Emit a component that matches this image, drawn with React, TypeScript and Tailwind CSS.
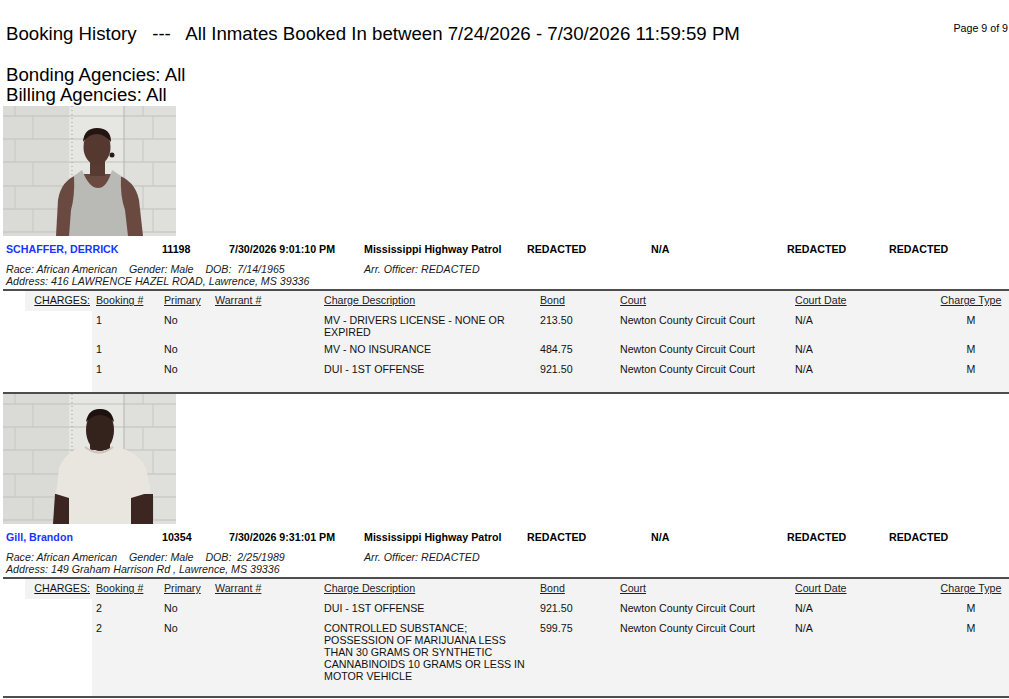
import React from "react";

type Charge = { booking: string; primary: string; desc: string; bond: string };

type Booking = {
  name: string;
  id: string;
  date: string;
  agency: string;
  race: string;
  gender: string;
  dob: string;
  address: string;
  photo: "tank" | "tee";
  charges: Charge[];
};

const BOOKINGS: Booking[] = [
  {
    name: "SCHAFFER, DERRICK",
    id: "11198",
    date: "7/30/2026 9:01:10 PM",
    agency: "Mississippi Highway Patrol",
    race: "African American",
    gender: "Male",
    dob: "7/14/1965",
    address: "416 LAWRENCE HAZEL ROAD, Lawrence, MS 39336",
    photo: "tank",
    charges: [
      { booking: "1", primary: "No", desc: "MV - DRIVERS LICENSE - NONE OR EXPIRED", bond: "213.50" },
      { booking: "1", primary: "No", desc: "MV - NO INSURANCE", bond: "484.75" },
      { booking: "1", primary: "No", desc: "DUI - 1ST OFFENSE", bond: "921.50" },
    ],
  },
  {
    name: "Gill, Brandon",
    id: "10354",
    date: "7/30/2026 9:31:01 PM",
    agency: "Mississippi Highway Patrol",
    race: "African American",
    gender: "Male",
    dob: "2/25/1989",
    address: "149 Graham Harrison Rd , Lawrence, MS 39336",
    photo: "tee",
    charges: [
      { booking: "2", primary: "No", desc: "DUI - 1ST OFFENSE", bond: "921.50" },
      {
        booking: "2",
        primary: "No",
        desc: "CONTROLLED SUBSTANCE; POSSESSION OF MARIJUANA LESS THAN 30 GRAMS OR SYNTHETIC CANNABINOIDS 10 GRAMS OR LESS IN MOTOR VEHICLE",
        bond: "599.75",
      },
    ],
  },
];

// mugshot stand-in: block wall + figure
function Mugshot({ kind }: { kind: "tank" | "tee" }) {
  const rows = [10, 33, 56, 80, 103, 126];
  return (
    <svg width="173" height="130" viewBox="0 0 173 130" className="block">
      <rect width="173" height="130" fill="#dadad7" />
      <rect x="66" y="0" width="55" height="130" fill="#e6e6e3" />
      <rect x="121" y="0" width="52" height="130" fill="#dfdfdc" />
      {rows.map((y) => (
        <line key={y} x1="0" y1={y} x2="173" y2={y} stroke="#c0c0bc" strokeWidth="1.2" />
      ))}
      {rows.map((y, i) => (
        <g key={"v" + y}>
          <line x1={i % 2 ? 30 : 12} y1={y - 23} x2={i % 2 ? 30 : 12} y2={y} stroke="#c6c6c2" />
          <line x1={i % 2 ? 150 : 140} y1={y - 23} x2={i % 2 ? 150 : 140} y2={y} stroke="#c6c6c2" />
        </g>
      ))}
      <line x1="69" y1="0" x2="69" y2="130" stroke="#9e9e9a" strokeDasharray="1 3" />
      <line x1="121" y1="0" x2="121" y2="130" stroke="#b4b4b0" />
      {kind === "tank" ? (
        <g>
          <path d="M53 130 L55 94 Q58 74 76 68 L112 68 Q132 74 136 94 L140 130 Z" fill="#6a4a40" />
          <rect x="87" y="52" width="15" height="18" fill="#573a32" />
          <path d="M71 70 L79 64 Q86 82 95 82 Q104 82 109 64 L118 70 Q117 90 122 104 L125 130 L66 130 L68 104 Q72 90 71 70 Z" fill="#b9b9b6" />
          <ellipse cx="94" cy="41" rx="13.5" ry="18" fill="#55382f" />
          <path d="M80 36 Q81 22 94 22 Q108 22 108 36 Q101 28 94 28 Q86 28 80 36 Z" fill="#231512" />
          <circle cx="109" cy="49" r="2.5" fill="#2a1a16" />
        </g>
      ) : (
        <g>
          <path d="M50 130 L52 100 L74 100 L74 130 Z" fill="#3b2621" />
          <path d="M126 130 L128 100 L150 100 L150 130 Z" fill="#3b2621" />
          <rect x="87" y="46" width="20" height="10" fill="#3a241f" />
          <path d="M80 52 Q96 62 112 52 Q136 58 143 74 L148 98 L128 104 L128 130 L66 130 L66 104 L53 100 L56 74 Q62 58 80 52 Z" fill="#e9e5df" />
          <path d="M82 53 Q96 64 110 53" fill="none" stroke="#c9c3bb" strokeWidth="2" />
          <ellipse cx="97" cy="36" rx="14" ry="21" fill="#34221d" />
          <path d="M83 28 Q85 15 97 15 Q109 15 111 28 Q104 21 97 21 Q90 21 83 28 Z" fill="#1d120f" />
        </g>
      )}
    </svg>
  );
}

function BookingRecord({ b }: { b: Booking }) {
  return (
    <div>
      <Mugshot kind={b.photo} />

      {/* name / booking summary */}
      <div className="grid grid-cols-[156px_67px_135px_163px_124px_136px_102px_1fr] pl-[3px] pt-[7px] text-[10.67px] leading-[12px] font-bold text-black">
        <div className="text-[#1a33ff]">{b.name}</div>
        <div>{b.id}</div>
        <div>{b.date}</div>
        <div>{b.agency}</div>
        <div>REDACTED</div>
        <div>N/A</div>
        <div>REDACTED</div>
        <div>REDACTED</div>
      </div>
      <div className="flex pl-[3px] mt-[8px] text-[10.67px] leading-[12px] italic text-[#1a1a1a]">
        <div className="w-[358px]">
          <div className="whitespace-pre">
            {`Race: ${b.race}    Gender: ${b.gender}    DOB:  ${b.dob}`}
          </div>
          <div>Address: {b.address}</div>
        </div>
        <div>Arr. Officer: REDACTED</div>
      </div>

      {/* charges */}
      <div className="mt-[2px] border-t-2 border-b-2 border-[#4d4d4d] flex text-[10.67px] leading-[12px] text-[#111]">
        <div className="ml-[22px] w-[67px] shrink-0">
          <div className="h-[20px] bg-[#f3f3f3] pt-[3px] pr-[2px] text-right underline underline-offset-[1px]">CHARGES:</div>
        </div>
        <div className="flex-1 bg-[#f3f3f3] pb-[12px]">
          <div className="grid grid-cols-[72px_51px_109px_216px_80px_175px_144px_64px_1fr] h-[20px] pt-[3px] underline underline-offset-[1px] text-[#222]">
            <div className="pl-[4px]">Booking #</div>
            <div>Primary</div>
            <div>Warrant #</div>
            <div>Charge Description</div>
            <div>Bond</div>
            <div>Court</div>
            <div>Court Date</div>
            <div className="text-center">Charge Type</div>
            <div />
          </div>
          {b.charges.map((c, i) => (
            <div
              key={i}
              className="grid grid-cols-[72px_51px_109px_216px_80px_175px_144px_64px_1fr] min-h-[20px] pt-[3px] pb-[2px]"
            >
              <div className="pl-[4px]">{c.booking}</div>
              <div>{c.primary}</div>
              <div />
              <div className="pr-[8px]">{c.desc}</div>
              <div>{c.bond}</div>
              <div>Newton County Circuit Court</div>
              <div>N/A</div>
              <div className="text-center">M</div>
              <div />
            </div>
          ))}
        </div>
      </div>
    </div>
  );
}

export default function App() {
  return (
    <div className="w-[1009px] h-[699px] overflow-hidden bg-white pl-[3px] font-['Liberation_Sans',Arial,sans-serif] text-black">
      <div className="flex justify-between items-start pt-[22px] pl-[3px]">
        <div className="mt-[1px] text-[18.67px] leading-[22px] whitespace-pre">
          {"Booking History   ---   All Inmates Booked In between 7/24/2026 - 7/30/2026 11:59:59 PM"}
        </div>
        <div className="text-[10.67px] leading-[12px] pr-[1px]">Page 9 of 9</div>
      </div>

      <div className="mt-[20px] pl-[3px] text-[18.67px] leading-[20px]">
        <div>Bonding Agencies: All</div>
        <div>Billing Agencies: All</div>
      </div>

      <div className="mt-[1px]">
        {BOOKINGS.map((b) => (
          <BookingRecord key={b.id} b={b} />
        ))}
      </div>
    </div>
  );
}
